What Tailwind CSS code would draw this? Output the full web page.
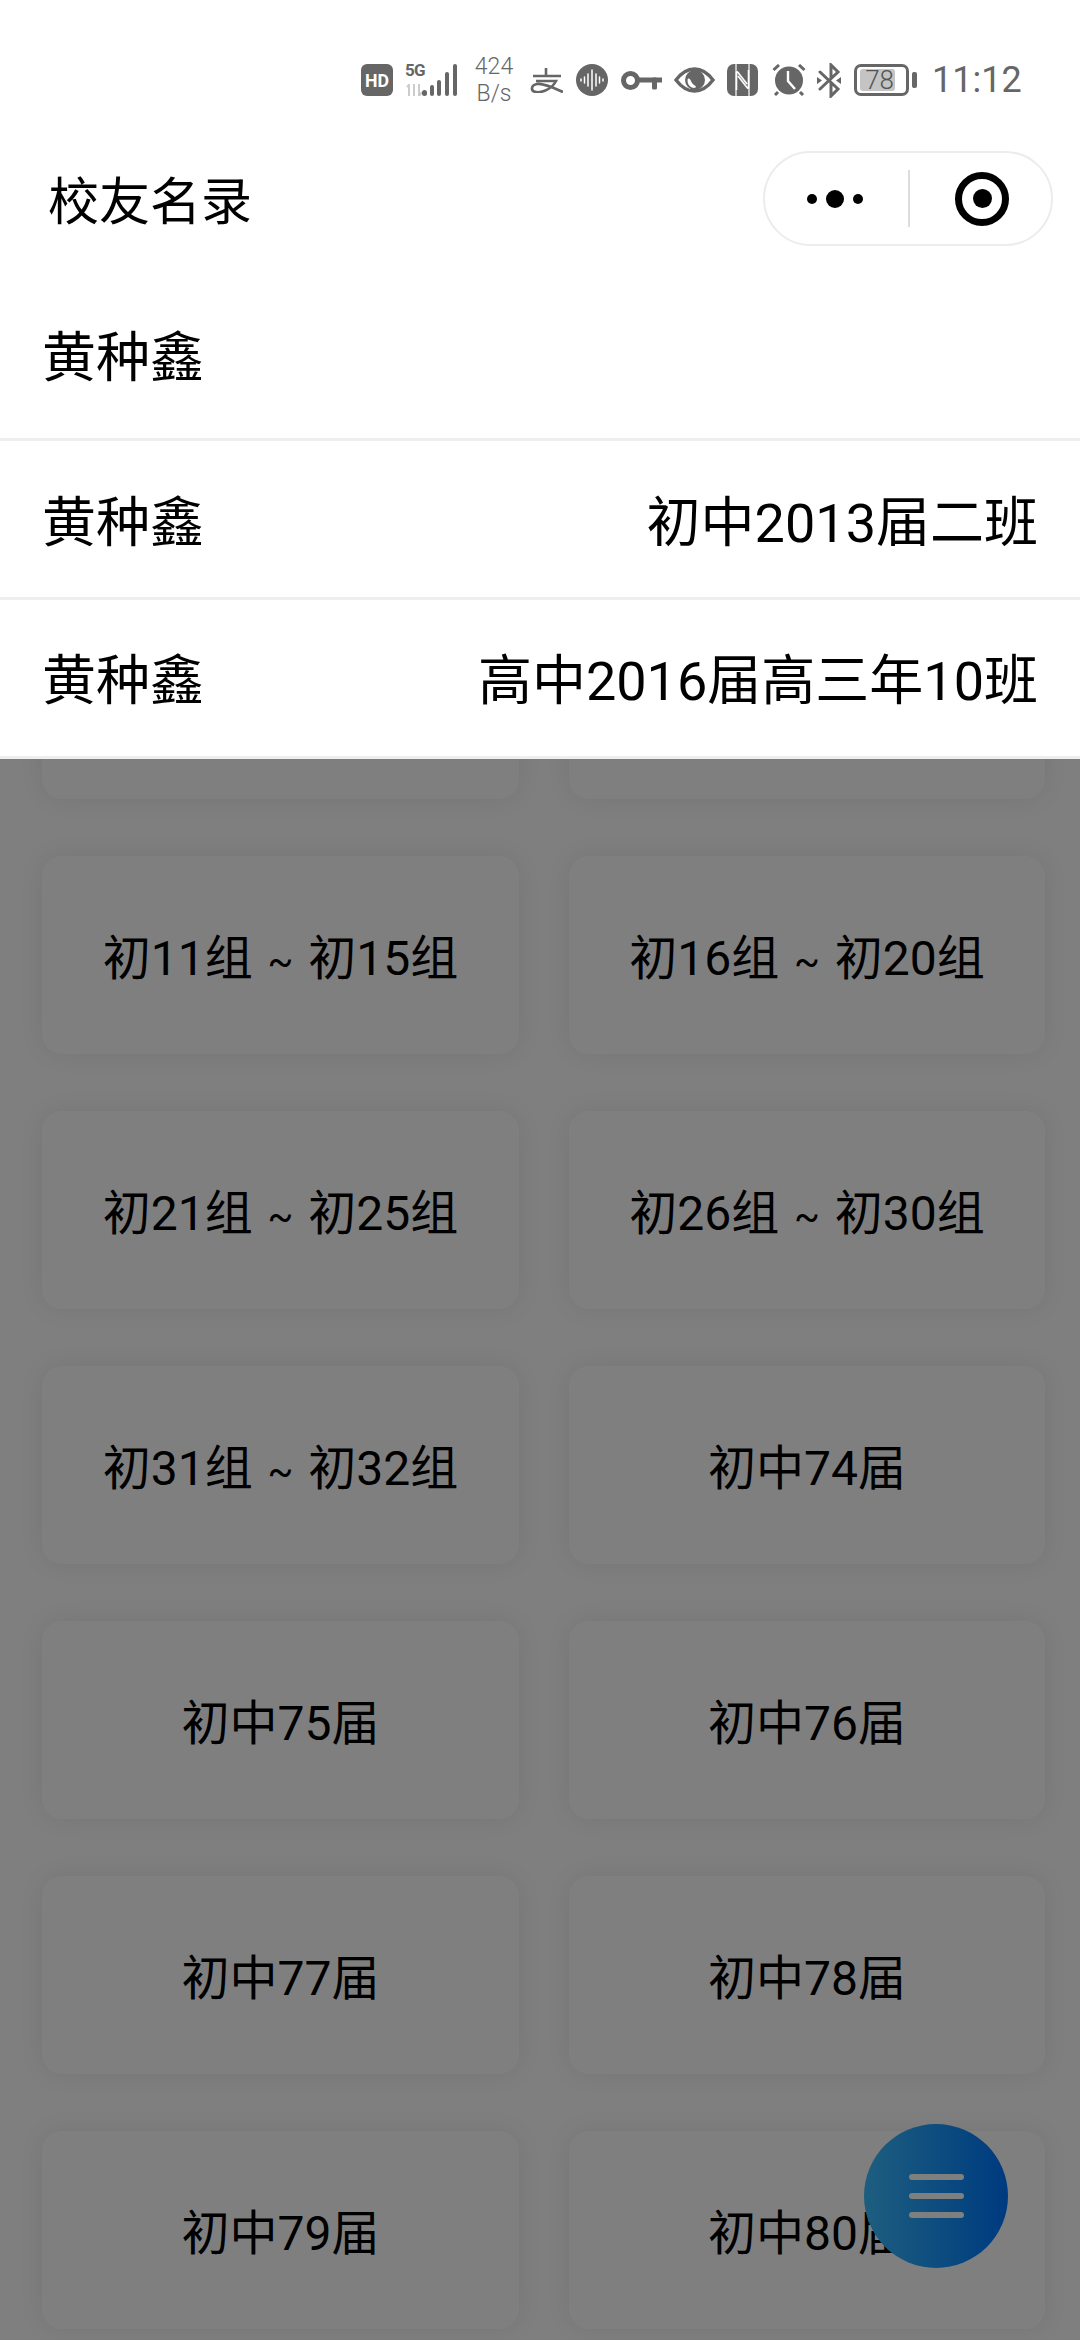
<!DOCTYPE html>
<html lang="en">
<head>
  <meta charset="UTF-8" />
  <meta name="viewport" content="width=device-width, initial-scale=1.0"/>
  <title>校友名录</title>
  <script src="https://cdn.jsdelivr.net/npm/@tailwindcss/browser@4"></script>
</head>
<body class="bg-white text-black overflow-hidden font-['Roboto','Noto_Sans_CJK_SC',sans-serif]">
  <div class="relative w-[1080px] h-[2340px] overflow-hidden bg-[#fefefe]">

    <!-- class grid, sits under the overlay and the search results -->
    <div class="pt-[601px] pl-[42px] pr-[35px] grid grid-cols-[477px_476px] gap-x-[50px] gap-y-[57px]">
      <div class="h-[198px] rounded-[20px] bg-white shadow-[0_0_24px_rgba(0,0,0,0.08)]"></div>
      <div class="h-[198px] rounded-[20px] bg-white shadow-[0_0_24px_rgba(0,0,0,0.08)]"></div>
      <div class="h-[198px] pt-[7px] flex items-center justify-center rounded-[20px] bg-white shadow-[0_0_24px_rgba(0,0,0,0.08)] text-[48px]"><span>初11组 <span class="mx-[3px] text-[38px]">~</span> 初15组</span></div>
      <div class="h-[198px] pt-[7px] flex items-center justify-center rounded-[20px] bg-white shadow-[0_0_24px_rgba(0,0,0,0.08)] text-[48px]"><span>初16组 <span class="mx-[3px] text-[38px]">~</span> 初20组</span></div>
      <div class="h-[198px] pt-[7px] flex items-center justify-center rounded-[20px] bg-white shadow-[0_0_24px_rgba(0,0,0,0.08)] text-[48px]"><span>初21组 <span class="mx-[3px] text-[38px]">~</span> 初25组</span></div>
      <div class="h-[198px] pt-[7px] flex items-center justify-center rounded-[20px] bg-white shadow-[0_0_24px_rgba(0,0,0,0.08)] text-[48px]"><span>初26组 <span class="mx-[3px] text-[38px]">~</span> 初30组</span></div>
      <div class="h-[198px] pt-[7px] flex items-center justify-center rounded-[20px] bg-white shadow-[0_0_24px_rgba(0,0,0,0.08)] text-[48px]"><span>初31组 <span class="mx-[3px] text-[38px]">~</span> 初32组</span></div>
      <div class="h-[198px] pt-[7px] flex items-center justify-center rounded-[20px] bg-white shadow-[0_0_24px_rgba(0,0,0,0.08)] text-[48px]">初中74届</div>
      <div class="h-[198px] pt-[7px] flex items-center justify-center rounded-[20px] bg-white shadow-[0_0_24px_rgba(0,0,0,0.08)] text-[48px]">初中75届</div>
      <div class="h-[198px] pt-[7px] flex items-center justify-center rounded-[20px] bg-white shadow-[0_0_24px_rgba(0,0,0,0.08)] text-[48px]">初中76届</div>
      <div class="h-[198px] pt-[7px] flex items-center justify-center rounded-[20px] bg-white shadow-[0_0_24px_rgba(0,0,0,0.08)] text-[48px]">初中77届</div>
      <div class="h-[198px] pt-[7px] flex items-center justify-center rounded-[20px] bg-white shadow-[0_0_24px_rgba(0,0,0,0.08)] text-[48px]">初中78届</div>
      <div class="h-[198px] pt-[7px] flex items-center justify-center rounded-[20px] bg-white shadow-[0_0_24px_rgba(0,0,0,0.08)] text-[48px]">初中79届</div>
      <div class="h-[198px] pt-[7px] flex items-center justify-center rounded-[20px] bg-white shadow-[0_0_24px_rgba(0,0,0,0.08)] text-[48px]">初中80届</div>
    </div>

    <!-- floating menu button -->
    <div class="absolute left-[864px] top-[2124px] w-[144px] h-[144px] rounded-full bg-gradient-to-r from-[#3bbcff] to-[#0074ff] flex flex-col items-center justify-center gap-[13px]">
      <div class="w-[55px] h-[6px] rounded-full bg-white"></div>
      <div class="w-[55px] h-[6px] rounded-full bg-white"></div>
      <div class="w-[55px] h-[6px] rounded-full bg-white"></div>
    </div>

    <!-- dim layer -->
    <div class="absolute inset-0 bg-black/50"></div>

    <!-- header + search results -->
    <div class="absolute left-0 top-0 w-full bg-white">

      <!-- status bar -->
      <div class="pt-[60px] pl-[361px] h-[100px] flex items-center text-[#666]">
        <svg class="w-[32px] h-[32px]" viewBox="0 0 32 32"><rect width="32" height="32" rx="6" fill="#666"/><text x="16" y="23" text-anchor="middle" font-size="19" font-weight="700" fill="#fff" font-family="Roboto" textLength="24" lengthAdjust="spacingAndGlyphs">HD</text></svg>
        <div class="relative w-[53px] h-[32px] ml-[12px]">
          <span class="absolute left-0 top-[-2px] text-[17px] leading-[16px] font-bold tracking-tighter">5G</span>
          <svg class="absolute left-0 top-[20px] w-[17px] h-[12px]" viewBox="0 0 17 12" fill="none" stroke="#ccc" stroke-width="2"><path d="M2 3l2-2v11M9 0v12M14 0v12M14 12l3-4"/></svg>
          <svg class="absolute left-[17px] top-0 w-[36px] h-[32px]" viewBox="0 0 36 32" fill="#666"><rect x="0" y="26" width="5" height="6" rx="2.5"/><rect x="8" y="21" width="4" height="11" rx="2"/><rect x="15" y="16" width="4" height="16" rx="2"/><rect x="23" y="8" width="4" height="24" rx="2"/><rect x="31" y="0" width="4" height="32" rx="2"/></svg>
        </div>
        <div class="w-[38px] ml-[17px] text-[23px] leading-[27px] font-light text-center whitespace-nowrap flex flex-col items-center"><span>424</span><span>B/s</span></div>
        <svg class="w-[33px] h-[25px] ml-[17px]" viewBox="0 0 33 25" fill="none" stroke="#666" stroke-width="2.6"><path d="M3 8H31M16 0V8M6 13H26C22 21 12 25 6 24C0 23 1 17 7 16C14 15 24 20 33 24"/></svg>
        <svg class="w-[32px] h-[32px] ml-[13px]" viewBox="0 0 32 32"><circle cx="16" cy="16" r="16" fill="#666"/><g stroke="#fff" stroke-width="1.5" stroke-linecap="round"><path d="M5 15v2M8.500 13v6M12 10v12M16 6v20M20 10v12M23.500 13v6M27 15v2"/></g></svg>
        <svg class="w-[41px] h-[19px] ml-[13px]" viewBox="0 0 41 19" fill="#666"><circle cx="9.500" cy="9.500" r="7" fill="none" stroke="#666" stroke-width="5"/><rect x="17" y="6.500" width="24" height="5"/><rect x="31" y="6.500" width="5" height="12" rx="1.500"/></svg>
        <svg class="w-[41px] h-[26px] ml-[12px]" viewBox="0 0 41 26"><path d="M2 13C8 5 14 2 20.500 2S33 5 39 13C33 21 27 24 20.500 24S8 21 2 13z" fill="none" stroke="#666" stroke-width="3.400"/><circle cx="21" cy="13" r="10" fill="#666"/><path d="M13.500 13a8 8 0 0 0 6 8c2 0 3-1 2-2-2-1-4-3-5-6-1-2-3-2-3 0z" fill="#fff"/></svg>
        <svg class="w-[31px] h-[32px] ml-[12px]" viewBox="0 0 31 32"><rect width="31" height="32" rx="7" fill="#666"/><path d="M9 0V32M22 0V32" stroke="#fff" stroke-width="1.200"/><path d="M9.500 26V8.500c0-1 1-1 1.500 0L20 20M21.500 6V23.500c0 1-1 1-1.500 0L11 12" fill="none" stroke="#fff" stroke-width="1.600"/></svg>
        <svg class="w-[34px] h-[32px] ml-[14px]" viewBox="0 0 34 32"><circle cx="17" cy="16.500" r="14" fill="#666"/><path d="M16 7V17L23 25" fill="none" stroke="#fff" stroke-width="2.400"/><path d="M1.500 6L7 1M32.500 6L27 1M6 28L3 31M28 28L31 31" fill="none" stroke="#666" stroke-width="3"/></svg>
        <svg class="w-[24px] h-[35px] ml-[11px]" viewBox="0 0 24 35"><path d="M3 9L21 26L14 33V20M3 26L21 9L14 2V15" fill="none" stroke="#666" stroke-width="3" stroke-linecap="round"/><path d="M0 14L5 17.500L0 21zM24 14L19 17.500L24 21z" fill="#666"/></svg>
        <div class="flex items-center ml-[13px]">
          <div class="w-[55px] h-[32px] rounded-[7px] border-[3px] border-[#666] pl-[3px] py-[2px] pr-[11px]">
            <div class="w-full h-full bg-[#c4c4c4] rounded-[3px] flex items-center justify-end pr-[1px] text-[26px] font-light leading-none text-[#555]">78</div>
          </div>
          <div class="w-[5px] h-[16px] bg-[#666] rounded-[2px] ml-[3px]"></div>
        </div>
        <span class="ml-[15px] text-[36px] leading-none">11:12</span>
      </div>

      <!-- mini program nav -->
      <div class="mt-[51px] h-[95px] pl-[48px] pr-[27px] flex items-center justify-between mb-[31px]">
        <span class="text-[51px] leading-none pt-[7px]">校友名录</span>
        <div class="w-[290px] h-[95px] rounded-full border-2 border-[#ececec] flex items-center">
          <div class="w-[140px] flex items-center justify-center gap-[9px]">
            <span class="w-[10px] h-[10px] rounded-full bg-black"></span>
            <span class="w-[18px] h-[18px] rounded-full bg-black"></span>
            <span class="w-[10px] h-[10px] rounded-full bg-black"></span>
          </div>
          <div class="w-[2px] h-[57px] ml-[3px] bg-[#ddd]"></div>
          <div class="flex-1 flex items-center justify-center pl-[3px]">
            <div class="w-[54px] h-[54px] rounded-full border-[7px] border-black flex items-center justify-center">
              <span class="w-[19px] h-[19px] rounded-full bg-black"></span>
            </div>
          </div>
        </div>
      </div>

      <!-- results -->
      <div class="h-[164px] pl-[42px] pr-[42px] pt-[2px] flex items-center justify-between border-b-[3px] border-[#eee] text-[54px]">
        <span>黄种鑫</span>
      </div>
      <div class="h-[159px] pl-[42px] pr-[42px] pt-[8px] flex items-center justify-between border-b-[3px] border-[#eee] text-[54px]">
        <span>黄种鑫</span>
        <span>初中2013届二班</span>
      </div>
      <div class="h-[159px] pl-[42px] pr-[42px] pt-[6px] flex items-center justify-between border-b-[3px] border-[#eee] text-[54px]">
        <span>黄种鑫</span>
        <span>高中2016届高三年10班</span>
      </div>
    </div>
  </div>
</body>
</html>
